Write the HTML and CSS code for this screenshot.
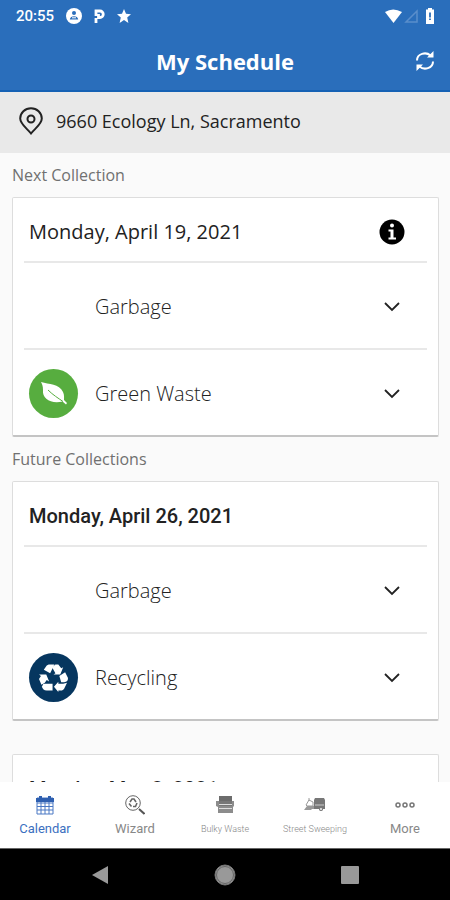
FILE: index.html
```
<!DOCTYPE html>
<html lang="en">
<head>
    <meta charset="UTF-8">
    <meta name="viewport" content="width=device-width, initial-scale=1">
    <title>My Schedule</title>
    <link rel="stylesheet" href="styles.css">
</head>
<body>
    <svg class="sprite" aria-hidden="true">
        <symbol id="chevron" viewBox="0 0 16 10">
            <path d="M1 1l7 7 7-7" fill="none" stroke="#222" stroke-width="1.800"/>
        </symbol>
    </svg>
    <header class="header">
        <div class="status">
            <span class="time">20:55</span>
            <svg width="16" height="16" viewBox="0 0 16 16">
                <circle cx="8" cy="8" r="8" fill="#fff"/>
                <circle cx="8" cy="5" r="2" fill="#2a6ebb"/>
                <path d="M3.800 11.500c0-4.500 8.400-4.500 8.400 0z" fill="#2a6ebb"/>
                <path d="M6 9.800h4" stroke="#fff"/>
            </svg>
            <svg width="11" height="14" viewBox="0 0 11 14">
                <path d="M2 14V9M2 7V2h4a3 3 0 0 1 0 6.500H4.500V5" fill="none" stroke="#fff" stroke-width="2.800"/>
            </svg>
            <svg width="14" height="14" viewBox="0 0 14 14">
                <path d="M7 0l2 4.800 5 .4-3.800 3.300L11.400 14 7 11l-4.400 3 1.200-5.500L0 5.200l5-.4z" fill="#fff"/>
            </svg>
            <span class="spacer"></span>
            <svg width="50" height="16" viewBox="0 0 50 16">
                <path d="M0 4q8-5 17 0L8.500 15z" fill="#fff"/>
                <path d="M32 3v11H21z" fill="none" stroke="#5a8ecb" stroke-width="1.500"/>
                <path d="M43 1.500V0h4v1.500h2V16h-8V1.500z" fill="#fff"/>
                <path d="M45 4.500v5M45 10.500v1.500" stroke="#2a6ebb" stroke-width="1.800"/>
            </svg>
        </div>
        <div class="titlebar">
            <h1>My Schedule</h1>
            <button class="refresh" aria-label="Refresh">
                <svg width="20" height="20" viewBox="0 0 20 20">
                    <path d="M2 9.500C2 2.500 11 .5 15.500 4.500M18 10.500c0 7-9 9-13.500 5" fill="none" stroke="#fff" stroke-width="2"/>
                    <path d="M18.500 0v6.500H12zM1.500 20v-6.500H8z" fill="#fff"/>
                </svg>
            </button>
        </div>
    </header>
    <div class="address">
        <svg width="24" height="28" viewBox="0 0 24 28">
            <path d="M12 26.500C8 21.500 1.200 17 1.200 11.500a10.800 10.300 0 0 1 21.600 0C22.800 17 16 21.500 12 26.500z" fill="none" stroke="#222" stroke-width="2"/>
            <circle cx="12" cy="12" r="3.500" fill="none" stroke="#222" stroke-width="2"/>
        </svg>
        <span>9660 Ecology Ln, Sacramento</span>
    </div>

    <main class="schedule">
        <h2>Next Collection</h2>
        <section class="card">
            <div class="date">
                <h3>Monday, April 19, 2021</h3>
                <button class="toggle" aria-label="Information">
                    <svg width="26" height="26" viewBox="0 0 26 26">
                        <circle cx="13" cy="13" r="12.500" fill="#000"/>
                        <circle cx="13" cy="6.500" r="2" fill="#fff"/>
                        <path d="M9.500 10.500h5v8H17v2H9.500v-2h2v-6h-2z" fill="#fff"/>
                    </svg>
                </button>
            </div>
            <div class="row">
                <span class="badge"></span>
                <span class="name">Garbage</span>
                <button class="toggle" aria-label="Show garbage"><svg width="16" height="10"><use href="#chevron"/></svg></button>
            </div>
            <div class="row">
                <span class="badge green">
                    <svg width="26" height="24" viewBox="0 0 26 24">
                        <path d="M0 0c8 2.500 18 1.500 22 10 1.500 3 1 6 1 8l3 3-1 1.500-3.500-3C10 22 1 17 2 8 2 4 1 2 0 0z" fill="#fff"/>
                        <path d="M7 8c5 5 10 8 15 11.500" fill="none" stroke="#57ad3f"/>
                    </svg>
                </span>
                <span class="name">Green Waste</span>
                <button class="toggle" aria-label="Show green waste"><svg width="16" height="10"><use href="#chevron"/></svg></button>
            </div>
        </section>

        <h2>Future Collections</h2>
        <section class="card">
            <div class="date">
                <h3 class="future">Monday, April 26, 2021</h3>
            </div>
            <div class="row">
                <span class="badge"></span>
                <span class="name">Garbage</span>
                <button class="toggle" aria-label="Show garbage"><svg width="16" height="10"><use href="#chevron"/></svg></button>
            </div>
            <div class="row">
                <span class="badge navy">
                    <svg width="29" height="28" viewBox="0 0 30 28">
                        <g fill="#fff">
                            <path d="M10 0h6l-4.500 9L5 5.500 8 1z"/>
                            <path d="M17 0h3l3 4 2-1-3 7.500h-7l2-1.500L13.500 3z"/>
                            <path d="M21 12l6-4 3 6c0 3-1 4-4 4.500h-3z"/>
                            <path d="M29 19l-3 6c-1 2-3 2-6 2v1.500L15.500 23l4.500-5v2h5z"/>
                            <path d="M14 20v7H8c-3 0-4-2-5-4l1.500-3z"/>
                            <path d="M2.500 21L0 15l2-3-2-1.500h7.500l3 7L8 16l-2 3z"/>
                        </g>
                    </svg>
                </span>
                <span class="name">Recycling</span>
                <button class="toggle" aria-label="Show recycling"><svg width="16" height="10"><use href="#chevron"/></svg></button>
            </div>
        </section>

        <section class="card later">
            <div class="date">
                <h3 class="future">Monday, May 3, 2021</h3>
            </div>
        </section>
    </main>

    <nav class="tabs">
        <a href="#calendar" class="active">
            <svg width="18" height="20" viewBox="0 0 18 20">
                <path d="M1 3h16v16H1zM1 8h16M1 11.500h16M1 15h16M5 7v12M9 7v12M13 7v12" fill="none" stroke="#4a78c4"/>
                <path d="M0 3h18v4H0zM3 1h3v4H3zM12 1h3v4h-3z" fill="#2e5fb0"/>
            </svg>
            <span>Calendar</span>
        </a>
        <a href="#wizard">
            <svg width="20" height="20" viewBox="0 0 20 20">
                <circle cx="8" cy="8" r="7.300" fill="none" stroke="#666"/>
                <path d="M5 7l2-3h2l2 3M12 8l-1.500 3.500H8M6.500 11.500L4 8.500" fill="none" stroke="#666" stroke-width="1.600"/>
                <path d="M14 14l5.500 5" stroke="#555" stroke-width="2"/>
            </svg>
            <span>Wizard</span>
        </a>
        <a href="#bulky" class="small">
            <svg width="20" height="20" viewBox="0 0 20 20">
                <path d="M4 1h13v5H4z" fill="#6c6c6c"/>
                <path d="M1 6h3v5h13V6h2v5l-1 1v6H3v-6l-2-1z" fill="#8c8c8c"/>
                <path d="M4 6h13v5H4z" fill="#777"/>
                <path d="M4 9.500h13M4 13.500h13" stroke="#ddd"/>
            </svg>
            <span>Bulky Waste</span>
        </a>
        <a href="#sweeping" class="small">
            <svg width="22" height="20" viewBox="0 0 22 20">
                <path d="M11 3h9l1 2v9h-2a2 2 0 0 1-4 0h-5V5z" fill="#777"/>
                <path d="M2 10l3-5 4 2v4H3zM5 3v3" fill="none" stroke="#999"/>
                <path d="M0 15l3-4h7v3H8l-1 1z" fill="#999"/>
                <circle cx="17" cy="14" r="1.500" fill="#fff" stroke="#777"/>
                <path d="M11 10h9" stroke="#ccc"/>
            </svg>
            <span>Street Sweeping</span>
        </a>
        <a href="#more">
            <svg width="20" height="20" viewBox="0 0 20 20" fill="none" stroke="#777" stroke-width="1.500">
                <circle cx="3" cy="10" r="2"/>
                <circle cx="10" cy="10" r="2"/>
                <circle cx="17" cy="10" r="2"/>
            </svg>
            <span>More</span>
        </a>
    </nav>
    <div class="system">
        <button aria-label="Back"><svg width="16" height="18" viewBox="0 0 16 18"><path d="M0 9l16-9v18z" fill="#999"/></svg></button>
        <button aria-label="Home"><svg width="22" height="22" viewBox="0 0 22 22"><circle cx="11" cy="11" r="10" fill="#999" stroke="#777"/><circle cx="11" cy="11" r="8.500" fill="none" stroke="#666"/></svg></button>
        <button aria-label="Recent apps"><svg width="18" height="18" viewBox="0 0 18 18"><rect width="18" height="18" rx="1" fill="#999"/></svg></button>
    </div>
</body>
</html>
```
FILE: styles.css
```
* {
    box-sizing: border-box;
}
body {
    margin: 0;
    height: 100vh;
    display: flex;
    flex-direction: column;
    overflow: hidden;
    background-color: #fafafa;
    font-family: "Open Sans", sans-serif;
    color: #222;
}
h1, h2, h3 {
    margin: 0;
    font-weight: 400;
}
button {
    display: flex;
    align-items: center;
    justify-content: center;
    padding: 0;
    border: 0;
    background: none;
}
svg {
    display: block;
    flex: none;
}
.sprite {
    position: absolute;
    width: 0;
    height: 0;
}
.header {
    flex: none;
    background-color: #2a6ebb;
    border-bottom: 2px solid #1561b4;
    color: #fff;
}
.status {
    display: flex;
    align-items: center;
    gap: 12px;
    height: 32px;
    padding: 0 15px 0 16px;
}
.time {
    font: 500 15px/32px Roboto, sans-serif;
}
.spacer {
    flex: 1;
}
.titlebar {
    display: grid;
    grid-template-columns: 50px 1fr 50px;
    align-items: center;
    height: 58px;
}
.titlebar h1 {
    grid-column: 2;
    text-align: center;
    font-size: 22px;
    font-weight: 700;
}
.refresh {
    height: 50px;
}
.address {
    flex: none;
    display: flex;
    align-items: center;
    gap: 13px;
    height: 61px;
    padding: 0 19px 3px;
    background-color: #e9e9e9;
    font-size: 18px;
}
.schedule {
    flex: 1;
    min-height: 0;
    overflow: hidden;
    padding: 0 11px 0 12px;
}
.schedule h2 {
    height: 44px;
    line-height: 44px;
    font-size: 16px;
    color: #707070;
}
.card {
    padding: 0 11px;
    background-color: #fff;
    border: 1px solid #ddd;
    border-bottom: 2px solid #c4c4c4;
    border-radius: 2px;
}
.later {
    margin-top: 33px;
}
.date {
    display: flex;
    align-items: center;
    justify-content: space-between;
    height: 63px;
    padding: 4px 22px 0 5px;
}
.date h3 {
    font-size: 20px;
}
.date .future {
    font-family: Roboto, sans-serif;
    font-weight: 500;
}
.row {
    display: flex;
    align-items: center;
    height: 87px;
    padding: 2px 22px 0 5px;
    border-top: 2px solid #e8e8e8;
}
.badge {
    display: flex;
    align-items: center;
    justify-content: center;
    width: 49px;
    height: 49px;
    margin-right: 17px;
    border-radius: 50%;
}
.green {
    background-color: #57ad3f;
}
.navy {
    background-color: #06365f;
}
.name {
    flex: 1;
    font-size: 20px;
    font-weight: 300;
}
.toggle {
    width: 26px;
    height: 26px;
}
.tabs {
    flex: none;
    display: grid;
    grid-template-columns: repeat(5, 1fr);
    height: 66px;
    padding-top: 13px;
    background-color: #fff;
}
.tabs a {
    display: flex;
    flex-direction: column;
    align-items: center;
    gap: 5px;
    font: 400 13px/18px Roboto, sans-serif;
    color: #888;
    text-decoration: none;
    white-space: nowrap;
}
.tabs .active {
    color: #3b6fc0;
}
.tabs .small {
    font-size: 9px;
    font-weight: 300;
}
.system {
    flex: none;
    display: flex;
    align-items: center;
    justify-content: space-between;
    height: 52px;
    padding: 0 88px;
    border-top: 1px solid #666;
    background-color: #000;
}
.system button {
    width: 24px;
    height: 24px;
}
```
